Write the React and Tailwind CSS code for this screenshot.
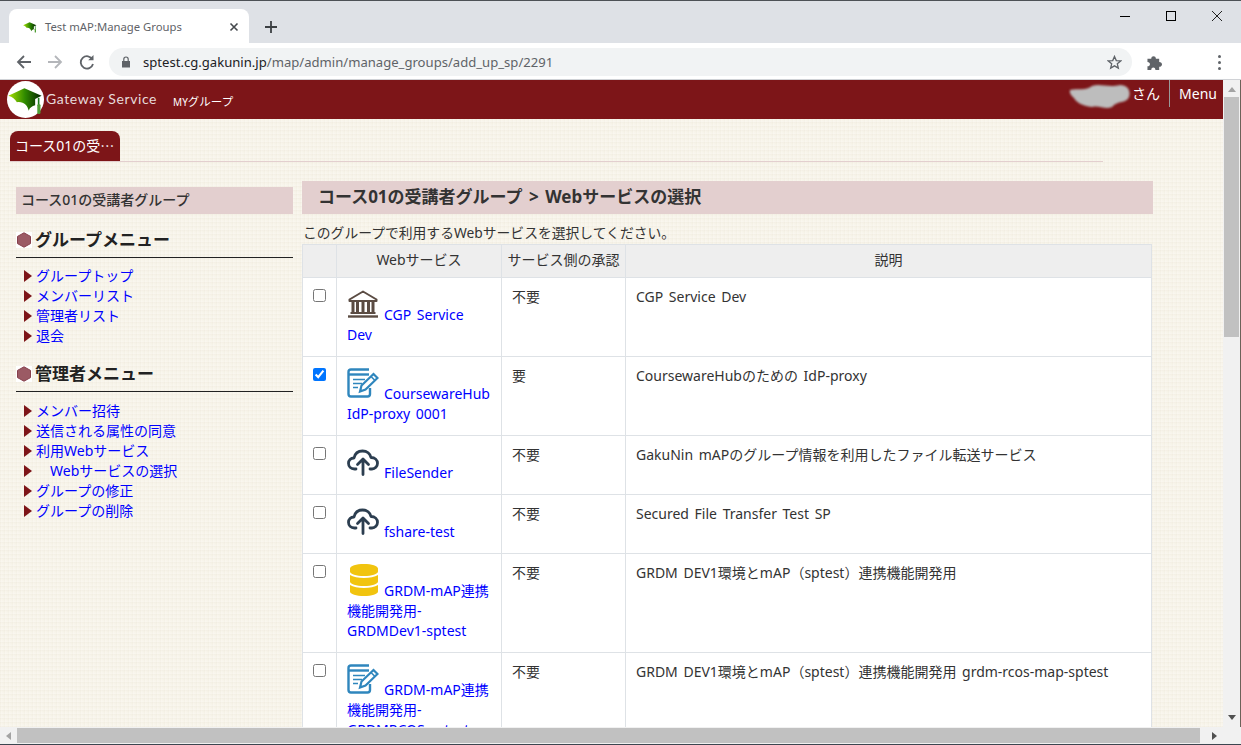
import React from "react";
import { FaDatabase } from "react-icons/fa";

const Cap = ({ className }) => (
  <svg viewBox="0 0 32 28" className={className}>
    <defs>
      <linearGradient id="capg" x1="0" x2="1" y1="0" y2="0">
        <stop offset="0" stopColor="#a8e000" />
        <stop offset="0.5" stopColor="#2f8a00" />
        <stop offset="1" stopColor="#012200" />
      </linearGradient>
    </defs>
    <path d="M0 10 L15 3 L31 10 L25 13 L25 19 C22 20 20 21 19 24 C18 19 14 15 8 16 C6 13 4 11 0 10 Z" fill="url(#capg)" />
    <rect x="27.5" y="12" width="1.5" height="7" fill="#1d7a1d" />
    <rect x="27" y="18" width="3" height="9" rx="1" fill="#4f9e35" />
  </svg>
);

const EditIcon = () => (
  <svg viewBox="0 0 32 32" className="w-8 h-8 inline-block align-baseline" fill="none" stroke="#2f86bd" strokeWidth="2.4">
    <path d="M22 2.5H4C2.5 2.5 1.5 3.5 1.5 5V27C1.5 28.5 2.5 29.5 4 29.5H20.5C22 29.5 23 28.5 23 27V21" />
    <path d="M1.5 7.5H22" />
    <path d="M6 12.5H18M6 16.5H15M6 20.5H11" strokeWidth="1.6" />
    <path d="M13 24.5L14.5 18.5L26.5 7L30.5 11L18.5 22.5Z" strokeWidth="2.2" />
    <path d="M24 9.5L28 13.5" strokeWidth="1.6" />
  </svg>
);

const CloudIcon = () => (
  <svg viewBox="0 0 32 32" className="w-8 h-8 inline-block align-baseline" fill="none" stroke="#2c3e50" strokeWidth="2.8" strokeLinecap="round" strokeLinejoin="round">
    <path d="M9 23H7.5C3.8 23 1.5 20.3 1.5 17.3C1.5 14.3 3.7 12 7 12C8 7.5 11.5 5 15.5 5C20 5 23.2 8 24 11.5C28 11.5 30.5 14.2 30.5 17.3C30.5 20.5 28 23 25 23H23" />
    <path d="M16 28.5V13.5M10.5 18.5L16 13L21.5 18.5" />
  </svg>
);

const Bank = () => (
  <svg viewBox="0 0 32 32" className="w-8 h-8 inline-block align-baseline" fill="none" stroke="#5b4c43">
    <path d="M2.5 11.5L16 3.5L29.5 11.5V13H2.5Z" strokeWidth="2" strokeLinejoin="round" />
    <path d="M6 14V24M10.5 14V24M16 14V24M21.5 14V24M26 14V24" strokeWidth="3" />
    <path d="M3.5 25H28.5" strokeWidth="2" />
    <path d="M1 28.5H31" strokeWidth="2.4" />
  </svg>
);
const Db = () => <FaDatabase className="inline-block align-baseline w-[30px] h-8 ml-0.5 text-[#f1c40f]" />;

const Hex = () => (
  <span className="inline-flex w-4 h-4 bg-white items-center justify-center shrink-0">
    <svg viewBox="0 0 16 16" className="w-4 h-4"><path d="M8 0.8L14.5 4.4V11.6L8 15.2L1.5 11.6V4.4Z" fill="#9b5a64" stroke="#87404c" /></svg>
  </span>
);

const Tri = () => <span className="w-0 h-0 border-y-[6px] border-y-transparent border-l-[8px] border-l-[#7d1518] mr-1 shrink-0" />;

const MenuLink = ({ children, indent }) => (
  <li className="flex items-center h-5">
    <Tri />
    <a className={`text-[#0000ff] ${indent ? "pl-3.5" : ""}`}>{children}</a>
  </li>
);

const rows = [
  { icon: <Bank />, name: "CGP Service Dev", need: "不要", desc: "CGP Service Dev", h: "h-[79px]" },
  { icon: <EditIcon />, name: "CoursewareHub IdP-proxy 0001", need: "要", desc: "CoursewareHubのための IdP-proxy", h: "h-[79px]", checked: true },
  { icon: <CloudIcon />, name: "FileSender", need: "不要", desc: "GakuNin mAPのグループ情報を利用したファイル転送サービス", h: "h-[59px]" },
  { icon: <CloudIcon />, name: "fshare-test", need: "不要", desc: "Secured File Transfer Test SP", h: "h-[59px]" },
  { icon: <Db />, name: "GRDM-mAP連携機能開発用-GRDMDev1-sptest", need: "不要", desc: "GRDM DEV1環境とmAP（sptest）連携機能開発用", h: "h-[99px]" },
  { icon: <EditIcon />, name: "GRDM-mAP連携機能開発用-GRDMRCOS-sptest", need: "不要", desc: "GRDM DEV1環境とmAP（sptest）連携機能開発用 grdm-rcos-map-sptest", h: "h-[99px]" },
];

export default function App() {
  return (
    <div className="w-[1241px] h-[745px] overflow-hidden flex flex-col bg-white text-[14px] leading-5 text-[#333] [word-spacing:2px] font-['Noto_Sans','Noto_Sans_CJK_JP',sans-serif]">
      {/* tab strip */}
      <div className="h-[43px] bg-[#dee1e6] border-t border-t-[#4d5156] flex items-end shrink-0 [word-spacing:0]">
        <div className="ml-[9px] w-[240px] h-[34px] bg-white rounded-t-lg flex items-center pl-[14px] pr-2.5 pt-0.5 text-[11.3px] text-[#5f6368]">
          <Cap className="w-[14px] h-3 mr-[8px]" />
          <span className="flex-1 whitespace-nowrap">Test mAP:Manage Groups</span>
          <svg viewBox="0 0 10 10" className="w-2.5 h-2.5" stroke="#45494d" strokeWidth="1.6"><path d="M1.5 1.5L8.5 8.5M8.5 1.5L1.5 8.5" /></svg>
        </div>
        <svg viewBox="0 0 14 14" className="w-[14px] h-[14px] ml-[15px] mb-[9px]" stroke="#3c4043" strokeWidth="1.8"><path d="M7 1V13M1 7H13" /></svg>
        <div className="flex-1" />
        <div className="flex items-center mb-[22px] gap-9 pr-[19px]">
          <span className="w-2.5 h-px bg-black" />
          <span className="w-2.5 h-2.5 border border-black" />
          <svg viewBox="0 0 10 10" className="w-2.5 h-2.5" stroke="#222" strokeWidth="1"><path d="M0 0L10 10M10 0L0 10" /></svg>
        </div>
      </div>
      {/* toolbar */}
      <div className="h-[37px] bg-white border-b border-b-[#d0d2d6] flex items-center shrink-0 pt-0.5 [word-spacing:0]">
        <svg viewBox="0 0 16 16" className="w-4 h-4 ml-4" fill="none" stroke="#5f6368" strokeWidth="1.8"><path d="M15 8H2M8 2L2 8L8 14" /></svg>
        <svg viewBox="0 0 16 16" className="w-4 h-4 ml-[15px]" fill="none" stroke="#b4b6ba" strokeWidth="1.8"><path d="M1 8H14M8 2L14 8L8 14" /></svg>
        <svg viewBox="0 0 16 16" className="w-4 h-4 ml-[16px]" fill="none" stroke="#5f6368" strokeWidth="1.8"><path d="M13.5 5.5A6.2 6.2 0 1 0 14 10" /><path d="M14.5 1V6.3H9.2Z" fill="#5f6368" stroke="none" /></svg>
        <div className="ml-[14px] w-[1023px] h-7 rounded-full bg-[#f1f3f4] flex items-center pl-3 pr-[10px] text-[13.1px]">
          <svg viewBox="0 0 10 12" className="w-2.5 h-3 mr-3" fill="#5f6368"><path d="M1 5H9V11.5H1Z" /><path d="M2.8 5V3.2A2.2 2.2 0 0 1 7.2 3.2V5" fill="none" stroke="#5f6368" strokeWidth="1.2" /></svg>
          <span className="flex-1 whitespace-nowrap"><span className="text-[#202124]">sptest.cg.gakunin.jp</span><span className="text-[#5f6368]">/map/admin/manage_groups/add_up_sp/2291</span></span>
          <svg viewBox="0 0 16 16" className="w-[15px] h-[15px]" fill="none" stroke="#5f6368" strokeWidth="1.4"><path d="M8 1.5L9.9 5.9L14.6 6.3L11 9.4L12.1 14L8 11.6L3.9 14L5 9.4L1.4 6.3L6.1 5.9Z" /></svg>
        </div>
        <svg viewBox="0 0 16 16" className="w-[15px] h-[15px] ml-[15px]" fill="#5f6368"><path d="M0.5 4H4.5C4.5 0.5 9.5 0.5 9.5 4H13V7.5C17 7.5 17 12.5 13 12.5V16H9C9 12.5 4.5 12.5 4.5 16H0.5V12C4 12 4 7.5 0.5 7.5Z" /></svg>
        <span className="ml-[56px] flex flex-col gap-[3px]">
          <span className="w-[3px] h-[3px] rounded-full bg-[#5f6368]" />
          <span className="w-[3px] h-[3px] rounded-full bg-[#5f6368]" />
          <span className="w-[3px] h-[3px] rounded-full bg-[#5f6368]" />
        </span>
      </div>
      {/* viewport */}
      <div className="flex-1 min-h-0 flex">
        <div className="flex-1 min-w-0 flex flex-col overflow-hidden bg-[#f6f2e6] bg-[repeating-linear-gradient(0deg,#e6decb60_0px,#ffffff40_1px,#0000_4px),repeating-linear-gradient(90deg,#e6decb60_0px,#ffffff40_1px,#0000_4px)]">
          {/* header */}
          <div className="h-[39px] shrink-0 bg-[#7d1518] flex items-start">
            <div className="ml-[7px] mt-px w-[37px] h-[37px] rounded-full bg-white flex items-center justify-center">
              <Cap className="w-[35px] h-[30px]" />
            </div>
            <span className="ml-0.5 mt-[9px] text-[14px] text-[#e6dada] font-['Lato',sans-serif] tracking-[0.6px] whitespace-nowrap [word-spacing:0]">Gateway Service</span>
            <span className="ml-[16px] mt-3 text-[11.5px] text-white whitespace-nowrap"><span className="text-[10px]">MY</span>グループ</span>
            <div className="flex-1" />
            <svg viewBox="0 0 64 28" className="w-16 h-7 mt-0.5 blur-[1px]">
              <path d="M2 8C10 6 18 9 24 4C32 1 40 6 52 3C60 3 63 9 61 15C58 22 50 18 44 25C36 28 32 23 24 25C14 24 8 20 6 16C4 14 1 12 2 8Z" fill="#bdbdbd" />
            </svg>
            <span className="mt-1 text-[14px] text-white">さん</span>
            <span className="ml-[9px] h-[27px] border-l border-l-[#9a9a9a]" />
            <span className="ml-[9px] mr-1.5 mt-1 text-[14px] text-white">Menu</span>
          </div>
          {/* tabs */}
          <div className="mt-3 ml-2.5 mr-[120px] border-b border-b-[#e3cfcf] flex shrink-0">
            <div className="h-[30px] w-[110px] rounded-t-lg bg-[#7d1518] text-white text-[14px] pl-[5px] pt-1 whitespace-nowrap">コース01の受<span className="font-['Noto_Sans_CJK_JP',sans-serif]">…</span></div>
          </div>
          {/* body */}
          <div className="flex mt-[19px] pl-4">
            <aside className="w-[277px] shrink-0 pt-1.5">
              <div className="h-[27px] bg-[#e3cfcf] pl-[5px] pt-[3px] text-[14px] font-medium text-[#333]">コース01の受講者グループ</div>
              <div className="mt-[15px] flex items-center gap-[3px] h-[22px] text-[17px] font-bold text-[#222]"><Hex />グループメニュー</div>
              <div className="mt-[6px] border-t border-t-[#222]" />
              <ul className="mt-2 ml-2">
                <MenuLink>グループトップ</MenuLink>
                <MenuLink>メンバーリスト</MenuLink>
                <MenuLink>管理者リスト</MenuLink>
                <MenuLink>退会</MenuLink>
              </ul>
              <div className="mt-[17px] flex items-center gap-[3px] h-[22px] text-[17px] font-bold text-[#222]"><Hex />管理者メニュー</div>
              <div className="mt-[6px] border-t border-t-[#222]" />
              <ul className="mt-[9px] ml-2">
                <MenuLink>メンバー招待</MenuLink>
                <MenuLink>送信される属性の同意</MenuLink>
                <MenuLink>利用Webサービス</MenuLink>
                <MenuLink indent>Webサービスの選択</MenuLink>
                <MenuLink>グループの修正</MenuLink>
                <MenuLink>グループの削除</MenuLink>
              </ul>
            </aside>
            <main className="ml-[9px] w-[851px] shrink-0">
              <div className="h-[33px] bg-[#e3cfcf] pl-4 pb-0.5 flex items-center text-[17px] font-bold text-[#333] whitespace-nowrap">コース01の受講者グループ &gt; Webサービスの選択</div>
              <div className="mt-[9px] ml-px h-5 text-[13.8px] whitespace-nowrap [word-spacing:0]">このグループで利用するWebサービスを選択してください。</div>
              <table className="mt-[1px] ml-0 w-[850px] table-fixed border-collapse bg-white border border-[#dee2e6]">
                <colgroup>
                  <col className="w-[34px]" />
                  <col className="w-[165px]" />
                  <col className="w-[124px]" />
                  <col />
                </colgroup>
                <thead>
                  <tr className="h-[33px] bg-[#eeeeee]">
                    <th className="border border-[#dee2e6]" />
                    <th className="border border-[#dee2e6] font-normal text-center pb-0.5">Webサービス</th>
                    <th className="border border-[#dee2e6] font-normal text-center whitespace-nowrap text-[14px] pb-0.5">サービス側の承認</th>
                    <th className="border border-[#dee2e6] font-normal text-center pb-0.5">説明</th>
                  </tr>
                </thead>
                <tbody>
                  {rows.map((r) => (
                    <tr key={r.name} className={r.h}>
                      <td className="border border-[#dee2e6] align-top pt-[11px] pl-[10px] pr-0">
                        <input type="checkbox" defaultChecked={r.checked} className="block w-[13px] h-[13px] accent-[#0075ff]" />
                      </td>
                      <td className="border border-[#dee2e6] align-top pt-[10px] pl-[10px] pr-2 text-[#0000ff] [overflow-wrap:anywhere]">
                        {r.icon}
                        <a className="ml-[5px]">{r.name}</a>
                      </td>
                      <td className="border border-[#dee2e6] align-top pt-[9px] pl-[10px]">{r.need}</td>
                      <td className="border border-[#dee2e6] align-top pt-[9px] pl-[10px] whitespace-nowrap">{r.desc}</td>
                    </tr>
                  ))}
                </tbody>
              </table>
            </main>
          </div>
        </div>
        {/* vertical scrollbar */}
        <div className="w-[18px] shrink-0 bg-[#f1f1f1] flex flex-col items-center border-r border-r-[#6b6259]">
          <span className="mt-[7px] w-0 h-0 border-x-[4px] border-x-transparent border-b-[5px] border-b-[#a3a3a3]" />
          <span className="mt-[5px] w-[15px] h-[240px] bg-[#c1c1c1]" />
          <span className="flex-1" />
          <span className="mb-[7px] w-0 h-0 border-x-[4px] border-x-transparent border-t-[5px] border-t-[#505050]" />
        </div>
      </div>
      {/* horizontal scrollbar */}
      <div className="h-[18px] shrink-0 bg-[#f1f1f1] flex items-center border-b border-b-[#3c4650]">
        <span className="ml-[6px] w-0 h-0 border-y-[4px] border-y-transparent border-r-[5px] border-r-[#a3a3a3]" />
        <span className="ml-[6px] w-[1183px] h-[15px] bg-[#c1c1c1]" />
        <span className="ml-[12px] w-0 h-0 border-y-[4px] border-y-transparent border-l-[5px] border-l-[#505050]" />
      </div>
    </div>
  );
}
